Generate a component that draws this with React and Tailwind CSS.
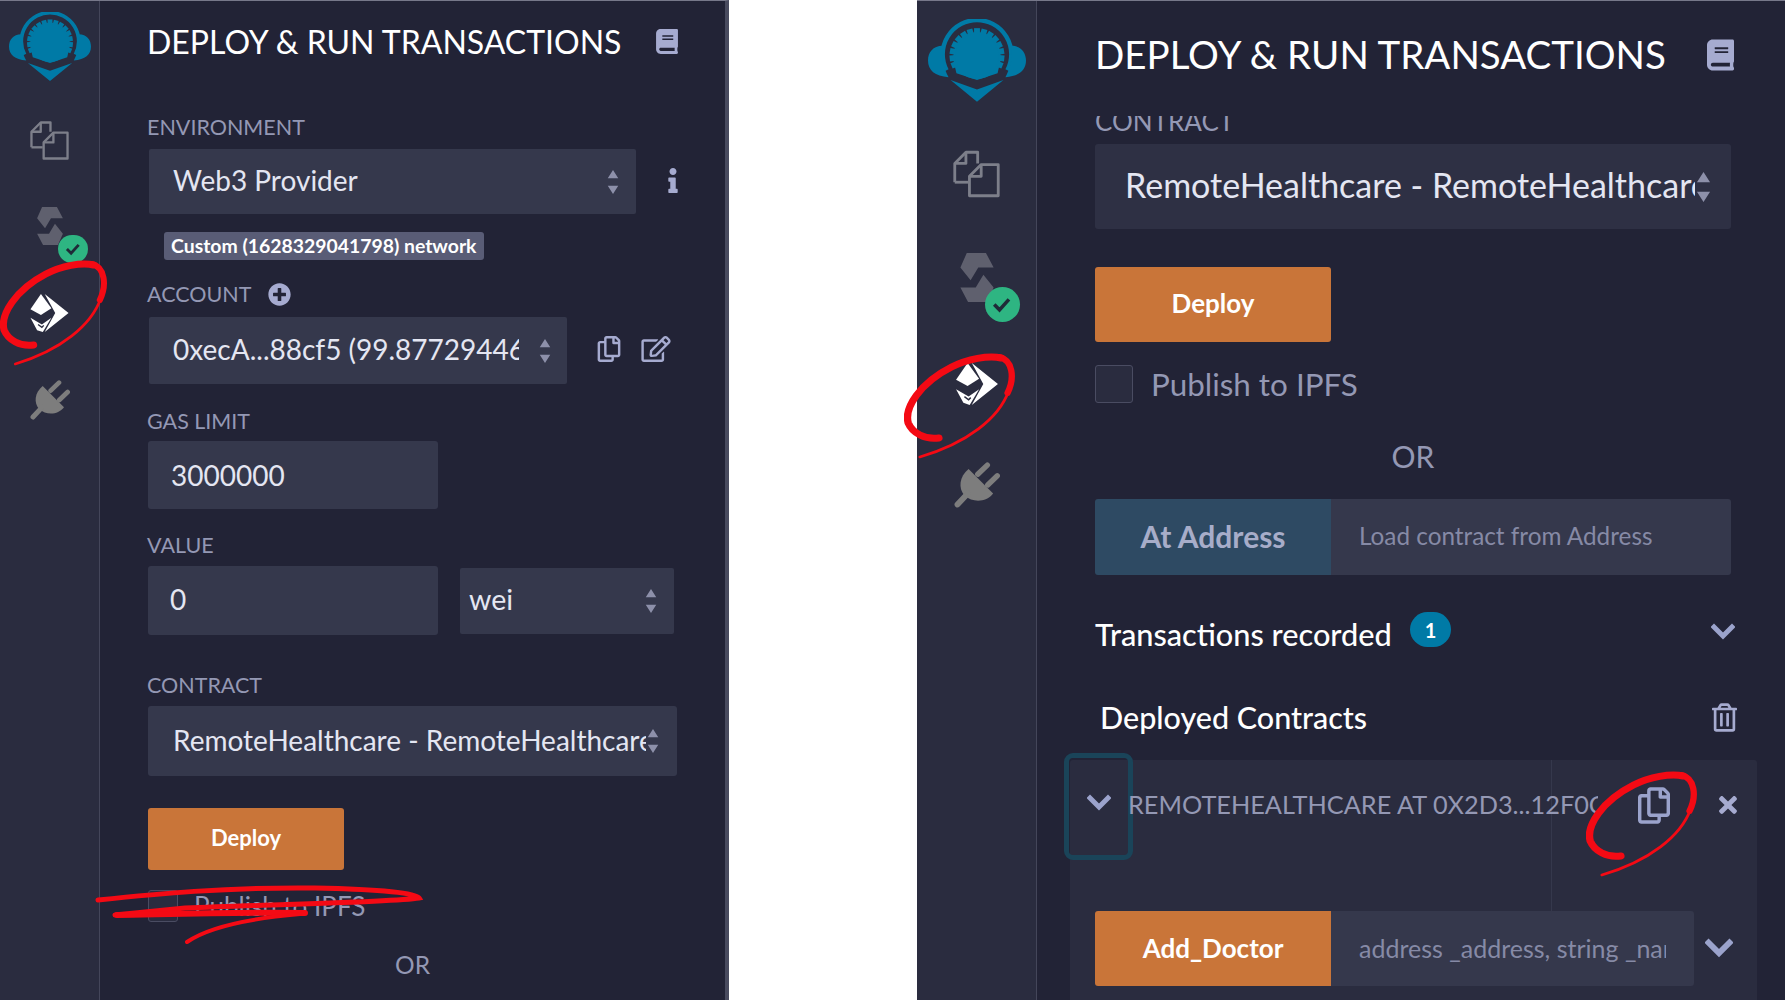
import React from "react";
import { FaBook, FaInfo, FaPlusCircle, FaRegCopy, FaRegEdit, FaTimes, FaRegTrashAlt } from "react-icons/fa";

const font = { fontFamily: "Lato, 'Noto Sans', sans-serif" };

function Arrows({ className = "" }) {
  return (
    <svg viewBox="0 0 14 32" className={className}>
      <path d="M7 0 L14 11 H0 Z M7 32 L14 21 H0 Z" fill="#8d90aa" />
    </svg>
  );
}

function Chevron({ className = "" }) {
  return (
    <svg viewBox="0 0 24 18" className={className}>
      <path d="M3 4 L12 13 L21 4" fill="none" stroke="#9ba3cc" strokeWidth="5" strokeLinecap="square" />
    </svg>
  );
}

function Logo({ className = "" }) {
  const teeth = [];
  for (let i = 0; i < 15; i++) {
    const deg = -112 + (224 * i) / 14;
    teeth.push(<rect key={i} x="47" y="9" width="6" height="6" fill="#007aa6" transform={`rotate(${deg} 50 37)`} />);
  }
  return (
    <svg viewBox="0 0 100 84" className={className}>
      <path d="M19 52 A35 35 0 1 1 81 52" fill="none" stroke="#007aa6" strokeWidth="4.5" />
      <path d="M15 27 C5 27 0 34 0 42 C0 52 7 58 21 59 C16 50 13 38 15 27 Z" fill="#007aa6" />
      <path d="M85 27 C95 27 100 34 100 42 C100 52 93 58 79 59 C84 50 87 38 85 27 Z" fill="#007aa6" />
      <circle cx="50" cy="37" r="24" fill="#007aa6" />
      <path d="M26 42 L29 55 L50 62 L71 55 L74 42 Z" fill="#007aa6" />
      {teeth}
      <path d="M23 62 L50 71.5 L77 62 L50 84 Z" fill="#007aa6" />
    </svg>
  );
}

function FilesIcon({ className = "" }) {
  return (
    <svg viewBox="0 0 40 40" className={className} fill="none" stroke="#7d7f8a" strokeWidth="2.4" strokeLinejoin="round">
      <path d="M1.5 27 V11 L11 1.5 H21 V11" />
      <path d="M11 1.5 V11 H1.5" />
      <path d="M1.5 27 H13" />
      <path d="M14 38.5 V22 L24 12 H38.5 V38.5 Z" />
      <path d="M24 12 V22 H14" />
    </svg>
  );
}

function SolidityIcon({ className = "" }) {
  return (
    <svg viewBox="0 0 78 115" className={className}>
      <path d="M15 0 H60 L78 34 H42 L24 64 L0 34 Z" fill="#5f606e" />
      <path d="M63 115 H18 L0 81 H36 L54 51 L78 81 Z" fill="#5f606e" />
    </svg>
  );
}

function DeployIcon({ className = "" }) {
  return (
    <svg viewBox="0 0 42 42" className={className}>
      <path d="M12 1 L23 16 L12 23 L1 17 Z" fill="#fff" />
      <path d="M1 26 L13 33 L23 26 L14 41 L8 39 Z" fill="#fff" />
      <path d="M16 1 L41 21 L16 41 L27 21 Z" fill="#fff" />
      <path d="M9 33 L13 36 L15 34" fill="none" stroke="#2a2c3f" strokeWidth="1.4" />
    </svg>
  );
}

function PlugIcon({ className = "" }) {
  return (
    <svg viewBox="0 0 120 120" className={className} fill="none" stroke="#7d7d7d" strokeLinecap="round">
      <path d="M38 18 L102 82 C84 106 48 106 28 88 C10 68 14 38 38 18 Z" fill="#7d7d7d" stroke="none" />
      <path d="M87 8 L62 32 M113 36 L88 60" strokeWidth="14" />
      <path d="M36 82 L9 111" strokeWidth="15" />
    </svg>
  );
}

function CheckBadge({ className = "" }) {
  return (
    <span className={`absolute flex items-center justify-center rounded-full bg-[#2eb582] ${className}`}>
      <svg viewBox="0 0 24 24" className="w-[72%] h-[72%]">
        <path d="M5 12 L10 17 L19 7" fill="none" stroke="#1f2a38" strokeWidth="3.4" />
      </svg>
    </span>
  );
}

function Scribble({ className = "" }) {
  return (
    <svg viewBox="0 0 106 106" preserveAspectRatio="none" className={`absolute pointer-events-none ${className}`} fill="none" stroke="#f40a14" strokeLinecap="round">
      <path d="M33 85 C20 87 8 80 4 70 C0 55 15 30 45 14 C60 6 80 2 92 5" strokeWidth="7" />
      <path d="M90 4 C103 7 105 25 98 40" strokeWidth="6" />
      <path d="M99 38 C90 65 60 90 15 104" strokeWidth="2.6" />
    </svg>
  );
}

function Sidebar({ big }) {
  return (
    <aside className={big ? "w-[120px] shrink-0 bg-[#2a2c3f] border-r border-[#44465a] flex flex-col items-center" : "w-[100px] shrink-0 bg-[#2a2c3f] border-r border-[#44465a] flex flex-col items-center"}>
      {big ? (
        <>
          <Logo className="w-[98px] h-[83px] mt-[18px]" />
          <FilesIcon className="w-[47px] h-[48px] mt-[48px]" />
          <div className="relative mt-[55px]">
            <SolidityIcon className="w-[36px] h-[49px] block" />
            <CheckBadge className="w-[35px] h-[35px] left-[26px] top-[34px]" />
          </div>
          <DeployIcon className="w-[46px] h-[44px] mt-[60px]" />
          <PlugIcon className="w-[46px] h-[46px] mt-[56px]" />
        </>
      ) : (
        <>
          <Logo className="w-[82px] h-[69px] mt-[11px]" />
          <FilesIcon className="w-[39px] h-[39px] mt-[40px]" />
          <div className="relative mt-[47px]">
            <SolidityIcon className="w-[30px] h-[38px] block" />
            <CheckBadge className="w-[30px] h-[28px] left-[23px] top-[28px]" />
          </div>
          <DeployIcon className="w-[41px] h-[40px] mt-[48px]" />
          <PlugIcon className="w-[40px] h-[40px] mt-[47px]" />
        </>
      )}
    </aside>
  );
}

function LeftPanel() {
  const label = "text-[21.5px] leading-[26px] text-[#9498b4]";
  const box = "bg-[#35384c] rounded-[2px] flex items-center text-[#e4e6f2]";
  return (
    <section className="w-[729px] h-[1000px] shrink-0 flex bg-[#222336] border-t border-[#77788a] border-r-4 border-r-[#494b5f] overflow-hidden">
      <Sidebar />
      <main className="flex-1 pl-[47px]">
        <div className="flex items-center h-[80px] pt-[1px]">
          <h1 className="text-[32px] leading-none text-white whitespace-nowrap">DEPLOY &amp; RUN TRANSACTIONS</h1>
          <FaBook className="w-[22px] h-[25px] ml-[35px] text-[#a6abd0]" />
        </div>
        <div className={`${label} mt-[33px]`}>ENVIRONMENT</div>
        <div className="flex items-center mt-[9px] ml-[2px]">
          <div className={`${box} w-[487px] h-[65px] pl-[24px] pr-[16px] text-[28px] justify-between`}>
            <span className="-mt-[3px]">Web3 Provider</span>
            <Arrows className="w-[14px] h-[24px]" />
          </div>
          <FaInfo className="w-[12px] h-[25px] ml-[31px] -mt-[3px] text-[#a6abd0]" />
        </div>
        <span className="inline-block mt-[18px] ml-[17px] h-[28px] w-[320px] px-[7px] rounded-[3px] bg-[#595c76] text-white text-[19.4px] font-bold leading-[27px] whitespace-nowrap">Custom (1628329041798) network</span>
        <div className="flex items-center mt-[21px] h-[26px]">
          <span className={label}>ACCOUNT</span>
          <FaPlusCircle className="w-[23px] h-[23px] ml-[17px] text-[#a6abd0]" />
        </div>
        <div className="flex items-center mt-[10px] ml-[2px]">
          <div className={`${box} w-[418px] h-[67px] pl-[24px] text-[28px]`}>
            <span className="-mt-[3px] w-[346px] overflow-hidden whitespace-nowrap">0xecA...88cf5 (99.87729446 ether)</span>
            <Arrows className="w-[14px] h-[24px] ml-[19px]" />
          </div>
          <FaRegCopy className="w-[24px] h-[26px] ml-[30px] -mt-[3px] text-[#a6abd0]" />
          <FaRegEdit className="w-[30px] h-[26px] ml-[20px] -mt-[3px] text-[#a6abd0]" />
        </div>
        <div className={`${label} mt-[24px]`}>GAS LIMIT</div>
        <div className={`${box} ml-[1px] w-[290px] h-[68px] pl-[23px] pb-[1px] text-[28px] mt-[7px] rounded-[3px]`}>3000000</div>
        <div className={`${label} mt-[23px]`}>VALUE</div>
        <div className="flex items-center mt-[8px] ml-[1px] gap-[22px]">
          <div className={`${box} w-[290px] h-[69px] pl-[22px] pb-[3px] text-[28px] rounded-[3px]`}>0</div>
          <div className={`${box} w-[214px] h-[66px] pl-[9px] pr-[16px] text-[28.5px] justify-between`}>
            <span className="-mt-[2px]">wei</span>
            <Arrows className="w-[14px] h-[24px]" />
          </div>
        </div>
        <div className={`${label} mt-[37px]`}>CONTRACT</div>
        <div className={`${box} ml-[1px] w-[529px] h-[70px] pl-[25px] text-[28px] mt-[8px] rounded-[3px]`}>
          <span className="-mt-[3px] w-[473px] overflow-hidden whitespace-nowrap">RemoteHealthcare - RemoteHealthcare</span>
          <Arrows className="w-[14px] h-[24px]" />
        </div>
        <button className="block ml-[1px] mt-[32px] w-[196px] h-[62px] pb-[4px] rounded-[3px] bg-[#c97539] text-white text-[22px] font-bold">Deploy</button>
        <div className="flex items-center ml-[1px] mt-[19px] h-[34px]">
          <span className="w-[30px] h-[32px] rounded-[3px] border border-[#4a4c62] bg-[#2a2c3f]" />
          <span className="ml-[16px] text-[26px] text-[#9498b4]">Publish to IPFS</span>
        </div>
        <div className="ml-[1px] w-[529px] text-center text-[24.5px] text-[#9498b4] mt-[27px] leading-[30px]">OR</div>
      </main>
    </section>
  );
}

function RightPanel() {
  const label = "text-[26px] leading-[30px] text-[#9498b4]";
  const box = "bg-[#35384c] flex items-center";
  return (
    <section className="flex-1 h-[1000px] flex bg-[#222336] border-t border-[#77788a] overflow-hidden">
      <Sidebar big />
      <main className="flex-1 flex flex-col">
        <div className="flex items-center h-[115px] pl-[58px] pb-[8px] shrink-0 bg-[#222336] z-10">
          <h1 className="text-[38.5px] leading-none text-white whitespace-nowrap">DEPLOY &amp; RUN TRANSACTIONS</h1>
          <FaBook className="w-[27px] h-[32px] ml-[41px] text-[#a6abd0]" />
        </div>
        <div className="pl-[58px] flex-1 -mt-[10px]">
          <div className={label}>CONTRACT</div>
          <div className="w-[636px] h-[85px] mt-[8px] rounded-[3px] bg-[#2e3044] flex items-center pl-[30px] text-[34px] text-[#e4e6f2]">
            <span className="-mt-[4px] w-[570px] overflow-hidden whitespace-nowrap">RemoteHealthcare - RemoteHealthcare</span>
            <Arrows className="w-[17px] h-[30px]" />
          </div>
          <button className="block mt-[38px] w-[236px] h-[75px] pb-[2px] rounded-[3px] bg-[#c97539] text-white text-[26px] font-bold">Deploy</button>
          <div className="flex items-center mt-[23px] h-[38px]">
            <span className="w-[38px] h-[38px] rounded-[3px] border border-[#4a4c62] bg-[#2a2c3f]" />
            <span className="ml-[18px] mt-[2px] text-[31.4px] text-[#9498b4]">Publish to IPFS</span>
          </div>
          <div className="w-[636px] text-center text-[30px] leading-[36px] text-[#9498b4] mt-[35px]">OR</div>
          <div className="flex w-[636px] h-[76px] mt-[25px] rounded-[3px] overflow-hidden">
            <div className="w-[236px] bg-[#2e4a63] flex items-center justify-center pb-[2px] text-[30px] font-bold text-[#a7adc9]">At Address</div>
            <div className={`${box} flex-1 pl-[28px] pb-[2px] text-[24.3px] text-[#868aa6]`}>Load contract from Address</div>
          </div>
          <div className="flex items-center w-[636px] h-[40px] mt-[40px] relative">
            <span className="text-[30.7px] text-white font-medium whitespace-nowrap">Transactions recorded</span>
            <span className="absolute left-[315px] -top-[3px] w-[41px] h-[35px] rounded-full bg-[#007aa6] text-white text-[20px] font-bold flex items-center justify-center">1</span>
            <Chevron className="absolute right-[-4px] top-[8px] w-[24px] h-[18px]" />
          </div>
          <div className="flex items-center w-[642px] h-[40px] mt-[43px] pl-[5px] justify-between">
            <span className="text-[30.5px] text-white font-medium whitespace-nowrap">Deployed Contracts</span>
            <FaRegTrashAlt className="w-[25px] h-[31px] -mt-[2px] text-[#a6abd0]" />
          </div>
          <div className="-ml-[25px] w-[687px] h-[240px] mt-[22px] bg-[#2a2c3f] rounded-t-[3px] relative">
            <div className="absolute -left-[6px] -top-[7px] w-[69px] h-[107px] rounded-[9px] border-[5px] border-[#1a4459] flex items-center justify-center pb-[8px]">
              <Chevron className="w-[24px] h-[18px]" />
            </div>
            <div className="absolute left-[481px] top-0 h-[155px] w-px bg-[#35384c]" />
            <div className="flex items-center h-[90px] pl-[58px] relative">
              <span className="text-[25.3px] text-[#9498b4] w-[470px] overflow-hidden whitespace-nowrap">REMOTEHEALTHCARE AT 0X2D3...12F0C</span>
              <FaRegCopy className="w-[32px] h-[37px] ml-[40px] text-[#9ba3cc]" />
              <FaTimes className="w-[22px] h-[26px] ml-[47px] text-[#a6abd0]" />
            </div>
            <div className="flex items-center ml-[25px] mt-[61px] relative">
              <div className="w-[236px] h-[75px] rounded-l-[3px] bg-[#c97539] flex items-center justify-center text-white text-[26px] font-bold">Add_Doctor</div>
              <div className={`${box} w-[363px] h-[75px] rounded-r-[3px] pl-[28px] text-[25px] text-[#868aa6]`}>
                <span className="w-[307px] overflow-hidden whitespace-nowrap">address _address, string _name</span>
              </div>
              <Chevron className="w-[28px] h-[21px] ml-[11px]" />
            </div>
          </div>
        </div>
      </main>
    </section>
  );
}

export default function App() {
  return (
    <div className="relative w-[1785px] h-[1000px] flex bg-white overflow-hidden" style={font}>
      <LeftPanel />
      <div className="w-[188px] shrink-0 bg-white" />
      <RightPanel />
      <Scribble className="w-[108px] h-[106px] left-0 top-[260px]" />
      <Scribble className="w-[112px] h-[106px] left-[904px] top-[353px]" />
      <Scribble className="w-[112px] h-[106px] left-[1586px] top-[771px]" />
      <svg viewBox="0 0 330 70" className="absolute left-[95px] top-[882px] w-[330px] h-[70px] pointer-events-none" fill="none" stroke="#f40a14" strokeLinecap="round">
        <path d="M3 18 C60 12 130 5 220 6 C270 7 320 10 324 16 C300 20 200 22 90 26 L20 33" strokeWidth="5" />
        <path d="M22 33 C80 32 150 30 210 31" strokeWidth="6" />
        <path d="M205 32 C160 36 115 44 92 60" strokeWidth="4" />
      </svg>
    </div>
  );
}
